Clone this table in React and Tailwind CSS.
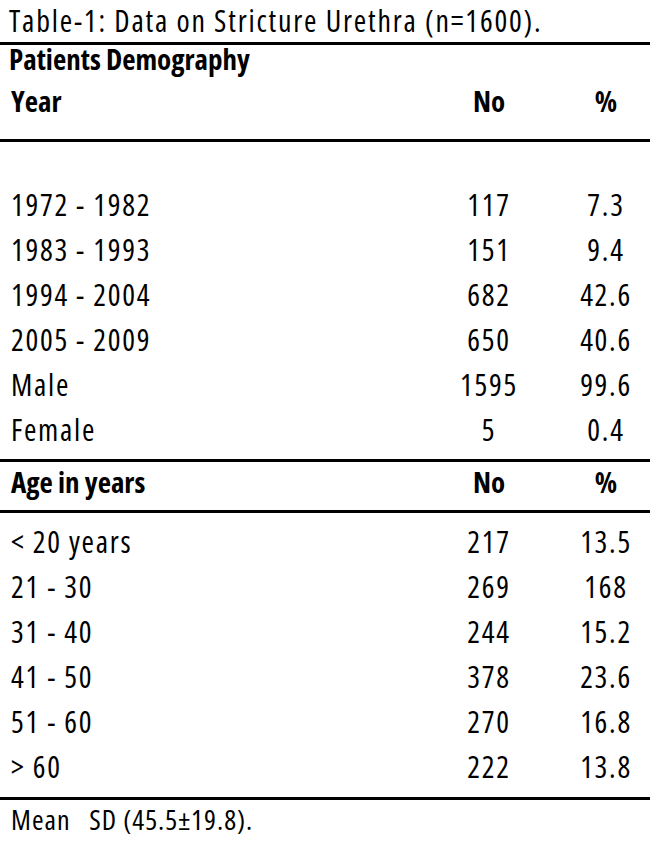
const demo = [
  ['1972 - 1982', '117', '7.3'],
  ['1983 - 1993', '151', '9.4'],
  ['1994 - 2004', '682', '42.6'],
  ['2005 - 2009', '650', '40.6'],
  ['Male', '1595', '99.6'],
  ['Female', '5', '0.4'],
];
const ages = [
  ['< 20 years', '217', '13.5'],
  ['21 - 30', '269', '168'],
  ['31 - 40', '244', '15.2'],
  ['41 - 50', '378', '23.6'],
  ['51 - 60', '270', '16.8'],
  ['> 60', '222', '13.8'],
];

function Row({ cells, bold = false, lh = 'leading-[45px]' }) {
  return (
    <div
      className={`grid grid-cols-[1fr_90px_56px] gap-x-[44px] pl-[11px] pr-4 ${lh} ${
        bold ? 'font-bold text-[29px]' : 'text-[30px] tracking-[1.7px]'
      }`}
    >
      <div className="whitespace-nowrap">{cells[0]}</div>
      <div className="text-center">{cells[1]}</div>
      <div className="text-center">{cells[2]}</div>
    </div>
  );
}

function Rule({ mt }) {
  return <div className={`h-[3px] bg-black ${mt}`} />;
}

export default function App() {
  return (
    <div className="w-[650px] h-[845px] bg-white text-black font-['Open_Sans',sans-serif] [font-stretch:75%] text-[29px] overflow-hidden">
      <div className="pl-[9px] leading-[41px] whitespace-nowrap text-[30px] tracking-[1.8px]">
        Table-1: Data on Stricture Urethra (n=1600).
      </div>
      <Rule mt="mt-[1px]" />
      <div className="pl-[9px] leading-[28px] font-bold">Patients Demography</div>
      <div className="mt-[14px]">
        <Row cells={['Year', 'No', '%']} bold lh="leading-[28px]" />
      </div>
      <Rule mt="mt-[24px]" />
      <div className="mt-[40px]">
        {demo.map((r) => (
          <Row key={r[0]} cells={r} />
        ))}
      </div>
      <Rule mt="mt-[7px]" />
      <Row cells={['Age in years', 'No', '%']} bold lh="leading-[40px]" />
      <Rule mt="mt-[8px]" />
      <div className="mt-[6px]">
        {ages.map((r) => (
          <Row key={r[0]} cells={r} />
        ))}
      </div>
      <Rule mt="mt-[8px]" />
      <div className="pl-[11px] text-[28px] tracking-[1px] leading-[38px] whitespace-nowrap">
        Mean&nbsp;&nbsp;&nbsp;SD (45.5±19.8).
      </div>
    </div>
  );
}
